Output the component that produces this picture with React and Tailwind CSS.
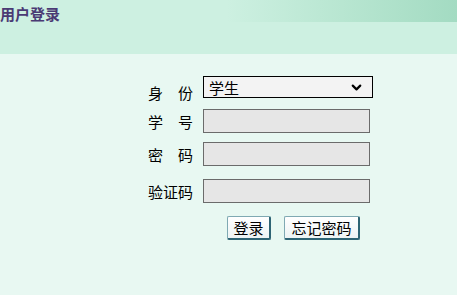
import React from "react";
import { ChevronDown } from "lucide-react";

const font = { fontFamily: '"SimSun", "Noto Sans CJK SC", sans-serif' };

const Field = () => (
  <div className="w-[167px] h-[24px] border border-[#6b6b6b] bg-[#e6e6e6]" />
);

const Row = ({ label, className = "", labelClass = "", children }) => (
  <div className={`flex items-center ${className}`}>
    <span className={`w-[55px] text-[15px] leading-none ${labelClass}`}>{label}</span>
    {children}
  </div>
);

const btn =
  "h-[24px] text-[15px] leading-none text-black rounded-[2px] border border-[#7fa9b3] border-r-2 border-b-2 border-r-[#2e6474] border-b-[#2e6474] bg-gradient-to-b from-white to-[#edf3f4]";

export default function App() {
  return (
    <div className="w-[457px] h-[295px] bg-[#e8f8f2] overflow-hidden" style={font}>
      {/* header */}
      <div className="relative h-[54px] bg-[#cdf0e1]">
        <div className="absolute right-0 top-0 h-[22px] w-[230px] bg-gradient-to-r from-[#cdf0e1]/0 via-[#b8e6d1] to-[#a3dbc2]" />
        <h1 className="relative text-[15px] leading-[28px] font-bold text-[#4a3a74]">
          用户登录
        </h1>
      </div>

      {/* form */}
      <div className="pl-[148px] pt-[22px] text-black">
        <Row label="身　份" labelClass="translate-y-[5px]">
          <div className="w-[170px] h-[22px] border border-black bg-[#f3f3f3] flex items-center justify-between pl-[5px] pr-[8px]">
            <span className="text-[15px] leading-none">学生</span>
            <ChevronDown size={15} strokeWidth={3.5} />
          </div>
        </Row>
        <Row label="学　号" className="mt-[11px]">
          <Field />
        </Row>
        <Row label="密　码" className="mt-[9px]">
          <Field />
        </Row>
        <Row label="验证码" className="mt-[13px]">
          <Field />
        </Row>

        <div className="flex gap-[13px] pl-[79px] mt-[13px]">
          <button className={`${btn} w-[44px]`}>登录</button>
          <button className={`${btn} w-[76px]`}>忘记密码</button>
        </div>
      </div>
    </div>
  );
}
